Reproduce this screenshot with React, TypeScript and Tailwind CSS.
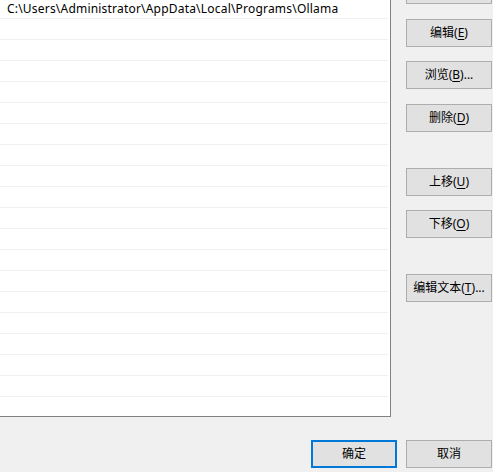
const font = "font-['Microsoft_YaHei','Noto_Sans','Noto_Sans_CJK_SC',sans-serif]";

function Btn({ label, k, rest, primary }: { label: string; k?: string; rest?: string; primary?: boolean }) {
  return (
    <button
      className={
        "flex h-[28px] w-[86px] shrink-0 items-center justify-center bg-[#e1e1e1] text-[12px] text-black " +
        (primary ? "border-2 border-[#0078d7]" : "border border-[#adadad]")
      }
    >
      {label}
      {k && (
        <span>
          (<span className="underline underline-offset-2">{k}</span>){rest}
        </span>
      )}
    </button>
  );
}

export default function App() {
  const rows = Array.from({ length: 20 });

  return (
    <div className={"flex h-[472px] w-[493px] flex-col overflow-hidden bg-[#f0f0f0] " + font}>
      <div className="flex h-[417px] shrink-0">
        <div className="h-[417px] w-[391px] shrink-0 overflow-hidden border-b border-r border-[#828282] bg-white">
          <div className="-mt-[2px] flex flex-col">
            {rows.map((_, i) => (
              <div key={i} className="flex h-[21px] w-[388px] shrink-0 items-center border-b border-[#f0f0f0] pl-[7px] pt-[2px] text-[12px] tracking-[0.2px] text-black">
                {i === 0 ? "C:\\Users\\Administrator\\AppData\\Local\\Programs\\Ollama" : ""}
              </div>
            ))}
          </div>
        </div>
        <div className="-mt-[24px] flex flex-col pl-[15px]">
          <Btn label="" />
          <div className="h-[15px] shrink-0" />
          <Btn label="编辑" k="E" />
          <div className="h-[14px] shrink-0" />
          <Btn label="浏览" k="B" rest="..." />
          <div className="h-[15px] shrink-0" />
          <Btn label="删除" k="D" />
          <div className="h-[36px] shrink-0" />
          <Btn label="上移" k="U" />
          <div className="h-[14px] shrink-0" />
          <Btn label="下移" k="O" />
          <div className="h-[36px] shrink-0" />
          <Btn label="编辑文本" k="T" rest="..." />
        </div>
      </div>
      <div className="flex justify-end gap-[9px] pr-[1px] pt-[23px]">
        <Btn label="确定" primary />
        <Btn label="取消" />
      </div>
    </div>
  );
}
